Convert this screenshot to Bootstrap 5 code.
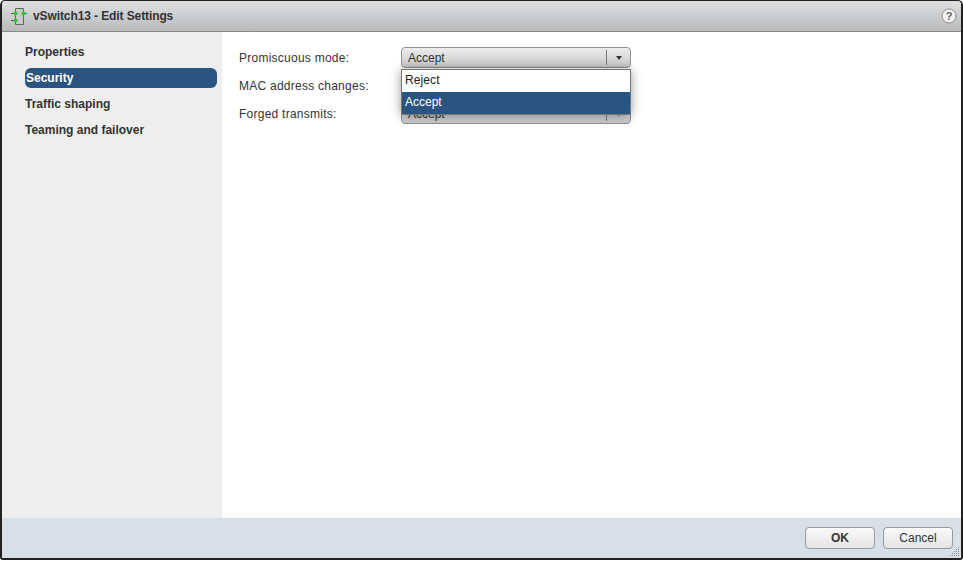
<!DOCTYPE html>
<html lang="en">
<head>
  <meta charset="UTF-8" />
  <title>vSwitch13 - Edit Settings</title>
  <link href="https://cdn.jsdelivr.net/npm/bootstrap@5.3.0/dist/css/bootstrap.min.css" rel="stylesheet" />
  <style>
    html, body { height: 100%; }
    body {
      background: #fff;
      font-family: "Liberation Sans", Arial, sans-serif;
      font-size: 12px;
      color: #333;
      overflow: hidden;
    }
    .dlg-window {
      width: 963px;
      height: 560px;
      border: solid #222;
      border-width: 1px 2px 2px 2px;
      border-radius: 5px 5px 3px 3px;
      background: #fff;
    }
    .dlg-title {
      height: 31px;
      padding: 0 4px 0 9px;
      background: linear-gradient(#dfe0e1, #b9babc);
      border-bottom: 1px solid #8a8a8a;
      font-weight: bold;
      color: #333;
      border-radius: 4px 4px 0 0;
    }
    .dlg-title span { letter-spacing: -.1px; margin-left: 4px; }
    .dlg-side {
      width: 220px;
      background: #eeeeee;
      padding: 10px 5px 0 23px;
    }
    .side-item {
      height: 20px;
      line-height: 20px;
      margin-bottom: 6px;
      font-weight: bold;
      border-radius: 6px;
      color: #333;
    }
    .side-item.on { background: #2b5580; color: #fff; padding-left: 1px; }
    .dlg-main { padding: 15px 0 0 17px; }
    .form-line { height: 21px; margin-bottom: 7px; }
    .form-cap { width: 162px; color: #333; letter-spacing: .25px; }
    .sel-box {
      width: 230px;
      height: 21px;
      border: 1px solid #8f8f8f;
      border-radius: 4px;
      background: linear-gradient(#ececec, #c9c9c9);
      color: #333;
      padding-left: 6px;
    }
    .sel-arrow {
      width: 24px;
      height: 15px;
      border-left: 1px solid #777;
    }
    .sel-arrow i {
      border: 3px solid transparent;
      border-top: 4px solid #333;
      border-bottom: 0;
    }
    .sel-wrap { width: 230px; }
    .sel-menu {
      position: absolute;
      left: 0;
      top: 22px;
      width: 230px;
      background: #fff;
      border: 1px solid #777;
      box-shadow: 0 1px 10px rgba(0, 0, 0, .4);
      z-index: 5;
    }
    .sel-opt { height: 22px; line-height: 21px; padding-left: 3px; color: #222; letter-spacing: .1px; }
    .sel-opt.on { background: #2b5580; color: #fff; letter-spacing: 0; }
    .dlg-foot {
      height: 40px;
      background: #d9dfe6;
      padding: 0 8px 0 0;
    }
    .foot-btn {
      width: 70px;
      height: 22px;
      padding: 0;
      font-size: 12px;
      line-height: 20px;
      color: #333;
      border: 1px solid #999;
      border-radius: 4px;
      background: linear-gradient(#fafafa, #e4e4e4);
    }
    .grip { position: absolute; right: 0; bottom: 0; }
  </style>
</head>
<body>
  <div class="dlg-window d-flex flex-column position-relative overflow-hidden">
    <div class="dlg-title d-flex align-items-center flex-shrink-0">
      <svg width="18" height="17" viewBox="0 0 18 17">
        <path d="M4.500 .5h8v16h-8z" fill="#c9c9c9" stroke="#666" />
        <path d="M0 5.500h4M13 5.500h3M0 12.500h4" fill="none" stroke="#555" />
        <circle cx="4.500" cy="5.500" r="2" fill="#2fc52f" />
        <circle cx="12.500" cy="5.500" r="2" fill="#2fc52f" />
        <circle cx="4.500" cy="12.500" r="2" fill="#2fc52f" />
      </svg>
      <span>vSwitch13 - Edit Settings</span>
      <svg width="16" height="16" viewBox="0 0 16 16" class="ms-auto">
        <circle cx="8" cy="8" r="7" fill="#f2f2f2" stroke="#8c8c8c" />
        <text x="8" y="12" text-anchor="middle" font-size="11" font-weight="bold" fill="#666" font-family="Liberation Sans">?</text>
      </svg>
    </div>
    <div class="d-flex flex-grow-1">
      <div class="dlg-side flex-shrink-0">
        <div class="side-item">Properties</div>
        <div class="side-item on">Security</div>
        <div class="side-item">Traffic shaping</div>
        <div class="side-item">Teaming and failover</div>
      </div>
      <div class="dlg-main flex-grow-1">
        <div class="form-line d-flex align-items-center">
          <div class="form-cap">Promiscuous mode:</div>
          <div class="sel-wrap position-relative">
            <div class="sel-box d-flex align-items-center justify-content-between">
              <span>Accept</span>
              <span class="sel-arrow d-flex align-items-center justify-content-center"><i></i></span>
            </div>
            <div class="sel-menu">
              <div class="sel-opt">Reject</div>
              <div class="sel-opt on">Accept</div>
            </div>
          </div>
        </div>
        <div class="form-line d-flex align-items-center">
          <div class="form-cap">MAC address changes:</div>
          <div class="sel-box d-flex align-items-center justify-content-between">
            <span>Accept</span>
            <span class="sel-arrow d-flex align-items-center justify-content-center"><i></i></span>
          </div>
        </div>
        <div class="form-line d-flex align-items-center">
          <div class="form-cap">Forged transmits:</div>
          <div class="sel-box d-flex align-items-center justify-content-between">
            <span>Accept</span>
            <span class="sel-arrow d-flex align-items-center justify-content-center"><i></i></span>
          </div>
        </div>
      </div>
    </div>
    <div class="dlg-foot d-flex align-items-center justify-content-end gap-2 flex-shrink-0">
      <button class="btn foot-btn fw-bold">OK</button>
      <button class="btn foot-btn">Cancel</button>
    </div>
    <svg class="grip" width="12" height="12" viewBox="0 0 12 12" fill="#8b8f94">
      <rect x="9" y="1" width="1" height="1" /><rect x="7" y="3" width="1" height="1" /><rect x="9" y="3" width="1" height="1" />
      <rect x="5" y="5" width="1" height="1" /><rect x="7" y="5" width="1" height="1" /><rect x="9" y="5" width="1" height="1" />
      <rect x="3" y="7" width="1" height="1" /><rect x="5" y="7" width="1" height="1" /><rect x="7" y="7" width="1" height="1" /><rect x="9" y="7" width="1" height="1" />
      <rect x="1" y="9" width="1" height="1" /><rect x="3" y="9" width="1" height="1" /><rect x="5" y="9" width="1" height="1" /><rect x="7" y="9" width="1" height="1" /><rect x="9" y="9" width="1" height="1" />
    </svg>
  </div>
  <script src="https://cdn.jsdelivr.net/npm/bootstrap@5.3.0/dist/js/bootstrap.bundle.min.js"></script>
</body>
</html>
